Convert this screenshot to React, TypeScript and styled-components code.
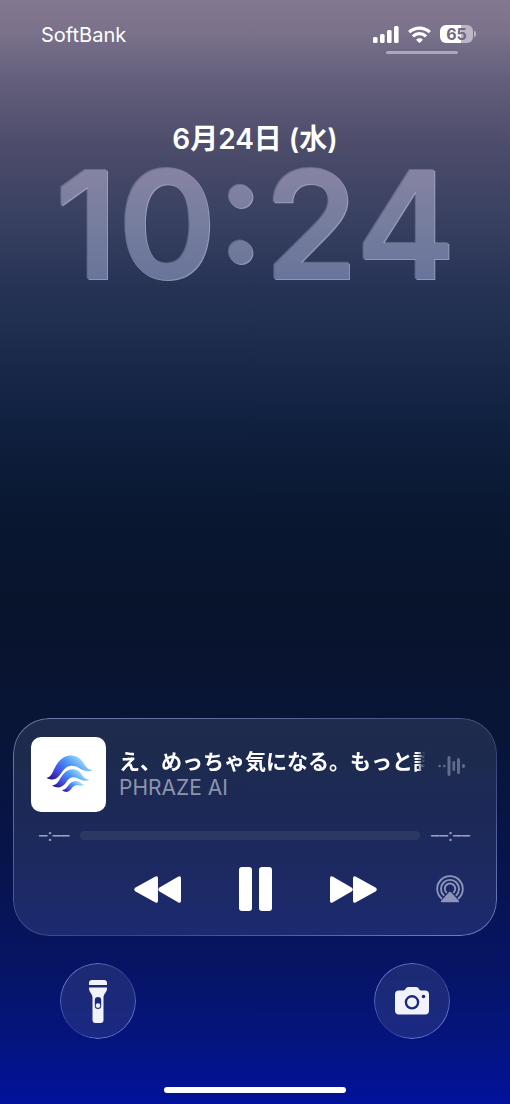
import React from "react";
import styled, { createGlobalStyle } from "styled-components";

const GlobalStyle = createGlobalStyle`
  * { box-sizing: border-box; }
  body { margin: 0; background: #00129a; }
  button { border: 0; padding: 0; margin: 0; background: none; color: inherit; font: inherit; cursor: pointer; }
  svg { display: block; }
`;

const Screen = styled.main`
  min-height: 100vh;
  display: flex;
  flex-direction: column;
  color: #fff;
  font-family: Inter, "Noto Sans CJK JP", sans-serif;
  background: linear-gradient(
    180deg,
    #84788f 0%,
    #7a718a 3%,
    #64607c 7%,
    #4d4c6b 13%,
    #384061 20%,
    #263355 26%,
    #1b2a4b 32%,
    #0f1f3e 39%,
    #091730 47%,
    #08142c 55%,
    #081536 66%,
    #071450 80%,
    #06146a 89%,
    #041482 95%,
    #02129c 100%
  );
`;

const StatusBar = styled.header`
  display: flex;
  justify-content: space-between;
  padding: 22px 34px 0 41px;
`;

const Carrier = styled.span`
  font-size: 20px;
  line-height: 26px;
`;

const StatusSide = styled.div`
  display: flex;
  flex-direction: column;
  gap: 5px;
`;

const StatusIcons = styled.div`
  display: flex;
  align-items: center;
  gap: 9px;
  height: 24px;
`;

const Battery = styled.div`
  display: flex;
  align-items: center;
  gap: 1px;
  &::after {
    content: "";
    width: 2px;
    height: 6px;
    border-radius: 0 2px 2px 0;
    background: #b9b3c2;
  }
`;

const BatteryBody = styled.div`
  width: 33px;
  height: 18px;
  border-radius: 6px;
  background: linear-gradient(90deg, #fff 65%, #bcb6c5 65%);
  color: #6f6984;
  font-size: 16px;
  font-weight: 700;
  line-height: 18px;
  text-align: center;
`;

const Grabber = styled.div`
  width: 72px;
  height: 3px;
  margin-left: 13px;
  border-radius: 2px;
  background: #aea6c0;
`;

const DateLine = styled.p`
  margin: 67px 0 0;
  font-size: 28px;
  font-weight: 600;
  line-height: 36px;
  text-align: center;
`;

const Clock = styled.time`
  display: block;
  align-self: center;
  font-size: 150px;
  font-weight: 600;
  line-height: 136px;
  color: transparent;
  background: linear-gradient(180deg, #8583a3 12%, #767d9d 50%, #67749a 92%);
  background-clip: text;
  -webkit-background-clip: text;
  filter: drop-shadow(1px 1px 0 rgba(225, 230, 250, 0.55)) drop-shadow(-1px -1px 0 rgba(200, 205, 230, 0.3));
`;

const Player = styled.section`
  position: relative;
  margin: auto 13px 0;
  padding: 19px 18px 25px;
  border-radius: 36px;
  background: linear-gradient(180deg, #1e2b4a 0%, #1c2957 45%, #1c2a70 100%);
  &::before {
    content: "";
    position: absolute;
    inset: 0;
    border-radius: inherit;
    padding: 1px;
    background: linear-gradient(
      155deg,
      #6e7fa6 0%,
      #4a5a88 40%,
      #36457a 60%,
      #7282c8 100%
    );
    mask: linear-gradient(#000 0 0) content-box exclude, linear-gradient(#000 0 0);
    pointer-events: none;
  }
`;

const TrackRow = styled.div`
  display: flex;
  align-items: center;
`;

const Artwork = styled.div`
  flex: none;
  width: 75px;
  height: 75px;
  border-radius: 10px;
  background: #fff;
`;

const TrackText = styled.div`
  flex: 1;
  min-width: 0;
  margin: 0 13px;
`;

const Title = styled.h1`
  margin: 0;
  overflow: hidden;
  white-space: nowrap;
  font-size: 21px;
  font-weight: 600;
  line-height: 26px;
  mask-image: linear-gradient(90deg, #000 calc(100% - 8px), transparent);
`;

const Artist = styled.p`
  margin: 0;
  font-size: 21px;
  line-height: 26px;
  color: #8d94ae;
`;

const LevelsBox = styled.div`
  flex: none;
  margin: 0 14px 18px 0;
`;

const ProgressRow = styled.div`
  display: flex;
  align-items: center;
  gap: 11px;
  margin-top: 14px;
  padding: 0 9px 0 8px;
`;

const TimeLabel = styled.span`
  font-size: 17px;
  line-height: 18px;
  color: #9aa1bb;
`;

const Track = styled.div`
  flex: 1;
  height: 9px;
  border-radius: 5px;
  background: #2c3864;
`;

const Controls = styled.div`
  display: grid;
  grid-template-columns: 1fr auto 1fr;
  align-items: center;
  margin-top: 23px;
`;

const SideControls = styled.div<{ $end?: boolean }>`
  display: flex;
  align-items: center;
  justify-content: ${(p) => (p.$end ? "space-between" : "flex-end")};
  padding: ${(p) => (p.$end ? "0 15px 0 58px" : "0 58px 0 0")};
`;

const Shortcuts = styled.nav`
  display: flex;
  justify-content: space-between;
  padding: 27px 60px 0;
`;

const RoundButton = styled.button`
  position: relative;
  display: grid;
  place-items: center;
  width: 76px;
  height: 76px;
  border-radius: 50%;
  background: linear-gradient(180deg, #1c2a72, #1a2884);
  &::before {
    content: "";
    position: absolute;
    inset: 0;
    border-radius: inherit;
    padding: 1px;
    background: conic-gradient(from 0deg, #6474c8, #2c3a8c 45deg, #6878d0 110deg, #6c7cd8 180deg, #2c3a94 225deg, #6a7ad0 290deg, #6474c8);
    mask: linear-gradient(#000 0 0) content-box exclude, linear-gradient(#000 0 0);
  }
`;

const HomeBar = styled.div`
  width: 182px;
  height: 6px;
  margin: 48px auto 11px;
  border-radius: 3px;
  background: #fff;
`;

const Signal = () => (
  <svg width="26" height="17" viewBox="0 0 26 17" fill="#fff" aria-hidden="true">
    <rect x="0" y="11" width="4.600" height="6" rx="1.500" />
    <rect x="7" y="8" width="4.600" height="9" rx="1.500" />
    <rect x="14" y="4" width="4.600" height="13" rx="1.500" />
    <rect x="21" y="0" width="4.600" height="17" rx="1.500" />
  </svg>
);

const Wifi = () => (
  <svg width="23" height="17" viewBox="0 0 23 17" aria-hidden="true">
    <g fill="none" stroke="#fff" strokeWidth="3.200">
      <path d="M1.200 6.200a14.800 14.800 0 0 1 20.600 0" />
      <path d="M5 10.300a9.400 9.400 0 0 1 13 0" />
    </g>
    <path d="M12.200 16.500q-.7.600-1.400 0l-2.700-2.800a4.900 4.900 0 0 1 6.800 0z" fill="#fff" />
  </svg>
);

const Waves = () => (
  <svg width="75" height="75" viewBox="0 0 75 75" role="img" aria-label="PHRAZE AI">
    <defs>
      <linearGradient id="wave" x1="0" y1="0.900" x2="1" y2="0.300">
        <stop offset="0" stopColor="#2c0f86" />
        <stop offset="0.300" stopColor="#4350e0" />
        <stop offset="0.600" stopColor="#4b93f6" />
        <stop offset="1" stopColor="#b4f6fa" />
      </linearGradient>
    </defs>
    <g fill="url(#wave)">
      <path d="M15.500 41C21 40 22 33 26 27C30 21 35 18.500 40 18.500C46 18.500 50 22 52.500 26C55 30 57.500 33 62 33.200C57 35.500 52 33.500 48 31C43 28 38 27.500 33.500 32C29 37 26 46 15.500 41Z" />
      <path d="M21 48.500C27 48 28 42.500 31.500 38C35 34 38 32.300 41.500 32.300C46 32.300 48.500 34.500 50.500 37.500C52.500 40.500 54.500 42.300 58.500 42.500C54.500 44.800 50.500 43.500 47 41.500C43 39.500 39.500 39.500 36.500 43.500C33 48 29.500 53.500 21 48.500Z" />
      <path d="M31 53C35.500 52.500 36 49.500 38.500 47C41 44.500 43 43.800 45.500 44C49.500 44.300 50 47.500 53.500 47.500C51 49.500 48.500 48.500 46.500 48.200C43.500 47.800 42 49.500 40.500 51.500C38 55 35 56.500 31 53Z" />
    </g>
  </svg>
);

const Levels = () => (
  <svg width="27" height="20" viewBox="0 0 27 20" fill="#626b8c" aria-hidden="true">
    <circle cx="1.500" cy="10" r="1.300" />
    <circle cx="6.300" cy="10" r="1.300" />
    <rect x="9.500" y="0" width="3" height="20" rx="1.500" />
    <rect x="14.500" y="5" width="2.600" height="10" rx="1.300" />
    <rect x="19" y="2" width="3" height="16" rx="1.500" />
    <rect x="24.200" y="8" width="2.600" height="4" rx="1.300" />
  </svg>
);

const Skip = ({ back }: { back?: boolean }) => (
  <svg width="47" height="27" viewBox="0 0 47 27" fill="#fff" aria-hidden="true">
    <g transform={back ? "matrix(-1 0 0 1 47 0)" : undefined}>
      <path d="M0 2.500Q0-.8 3 .8L21.500 11.500Q24 13.500 21.500 15.500L3 26.200Q0 27.800 0 24.500Z" />
      <path d="M23 2.500Q23-.8 26 .8L45.500 11.500Q48 13.500 45.500 15.500L26 26.200Q23 27.800 23 24.500Z" />
    </g>
  </svg>
);

const Pause = () => (
  <svg width="33" height="44" viewBox="0 0 33 44" fill="#fff" aria-hidden="true">
    <rect width="13" height="44" rx="3" />
    <rect x="20" width="13" height="44" rx="3" />
  </svg>
);

const AirPlay = () => (
  <svg width="28" height="28" viewBox="0 0 28 28" aria-hidden="true">
    <g fill="none" stroke="#8d95b8" strokeWidth="1.900" strokeLinecap="round">
      <path d="M5.400 23.400a12.800 12.800 0 1 1 17.200 0" />
      <path d="M7.600 20.200a9 9 0 1 1 12.800 0" />
      <path d="M10.300 17.300a5.200 5.200 0 1 1 7.400 0" />
    </g>
    <path d="M13 17.200q1-1.100 2 0l7.800 8.500q1.100 1.600-.6 1.600H5.800q-1.700 0-.6-1.600z" fill="#8d95b8" />
  </svg>
);

const Torch = () => (
  <svg width="18" height="43" viewBox="0 0 18 43" fill="#f2f3fa" aria-hidden="true">
    <path d="M0 5V3Q0 0 3 0H15Q18 0 18 3V5Z" />
    <path
      fillRule="evenodd"
      d="M0 7.500H18V8.500C18 12 14.500 14 14.500 17.500V40Q14.500 43 11.500 43H6.500Q3.500 43 3.500 40V17.500C3.500 14 0 12 0 8.500ZM9 17A3.200 3.200 0 0 0 5.800 20.200V25.800A3.200 3.200 0 0 0 12.200 25.800V20.200A3.200 3.200 0 0 0 9 17Z"
    />
    <circle cx="9" cy="25.600" r="2.300" />
  </svg>
);

const Camera = () => (
  <svg width="34" height="28" viewBox="0 0 34 28" aria-hidden="true">
    <path
      fill="#f2f3fa"
      d="M4 3.500H8.500C10.500 3.500 10.500 0 13.500 0H21C24 0 24 3.500 26 3.500H30Q34 3.500 34 7.500V23.500Q34 27.500 30 27.500H4Q0 27.500 0 23.500V7.500Q0 3.500 4 3.500Z"
    />
    <circle cx="17" cy="15.300" r="6.100" fill="none" stroke="#1b2980" strokeWidth="2.400" />
    <circle cx="28.500" cy="9.500" r="1.800" fill="#1b2980" />
  </svg>
);

export default function App() {
  return (
    <>
      <GlobalStyle />
      <Screen>
        <StatusBar>
          <Carrier>SoftBank</Carrier>
          <StatusSide>
            <StatusIcons>
              <Signal />
              <Wifi />
              <Battery>
                <BatteryBody>65</BatteryBody>
              </Battery>
            </StatusIcons>
            <Grabber />
          </StatusSide>
        </StatusBar>
        <DateLine>6月24日 (水)</DateLine>
        <Clock>10:24</Clock>
        <Player aria-label="再生中">
          <TrackRow>
            <Artwork>
              <Waves />
            </Artwork>
            <TrackText>
              <Title>え、めっちゃ気になる。もっと詳</Title>
              <Artist>PHRAZE AI</Artist>
            </TrackText>
            <LevelsBox>
              <Levels />
            </LevelsBox>
          </TrackRow>
          <ProgressRow>
            <TimeLabel>–:––</TimeLabel>
            <Track />
            <TimeLabel>––:––</TimeLabel>
          </ProgressRow>
          <Controls>
            <SideControls>
              <button aria-label="巻き戻し">
                <Skip back />
              </button>
            </SideControls>
            <button aria-label="一時停止">
              <Pause />
            </button>
            <SideControls $end>
              <button aria-label="早送り">
                <Skip />
              </button>
              <button aria-label="AirPlay">
                <AirPlay />
              </button>
            </SideControls>
          </Controls>
        </Player>
        <Shortcuts>
          <RoundButton aria-label="フラッシュライト">
            <Torch />
          </RoundButton>
          <RoundButton aria-label="カメラ">
            <Camera />
          </RoundButton>
        </Shortcuts>
        <HomeBar />
      </Screen>
    </>
  );
}
